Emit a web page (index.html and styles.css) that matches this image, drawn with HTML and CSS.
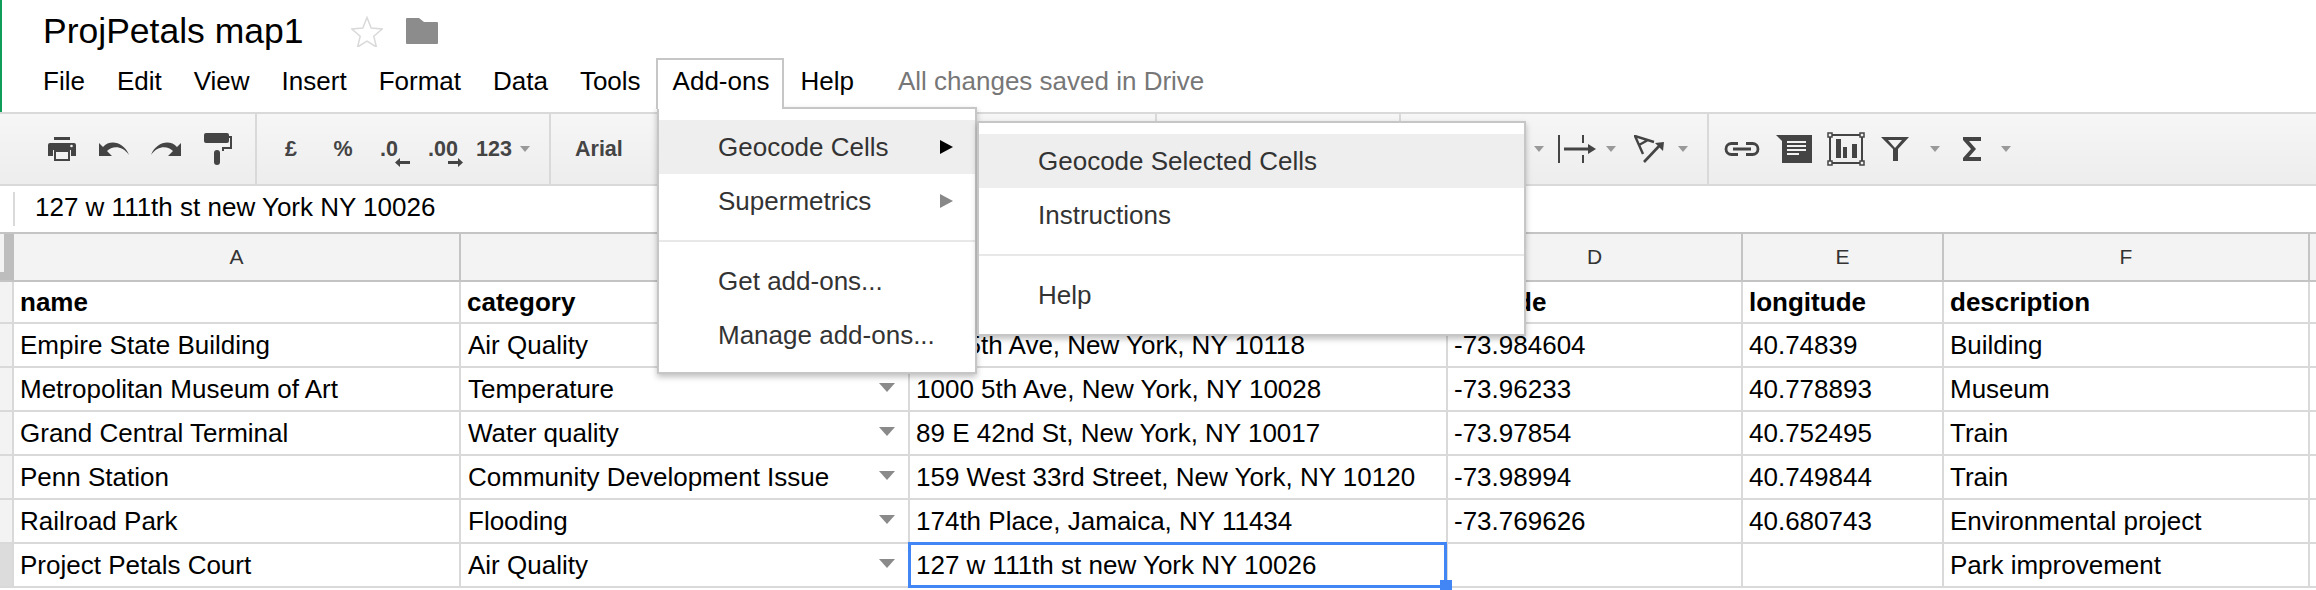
FILE: index.html
```html
<!DOCTYPE html>
<html lang="en">
<head>
    <meta charset="UTF-8">
    <meta name="viewport" content="width=device-width, initial-scale=1.0">
    <title>ProjPetals map1</title>
    <link rel="stylesheet" href="styles.css">
</head>
<body>
    <div class="sheet-page">
        <header class="doc-header">
            <div class="title-row">
                <h1 class="doc-title">ProjPetals map1</h1>
                <svg class="star-icon" viewBox="0 0 32 31"><path d="M16 1.5l4.2 10.6 11 .9-8.4 7.3 2.6 10.7L16 25.2l-9.4 5.8 2.6-10.7L.8 13l11-.9z"/></svg>
                <svg class="folder-icon" viewBox="0 0 32 26"><path d="M1 0h12l5 4h13a1 1 0 0 1 1 1v20a1 1 0 0 1-1 1H1a1 1 0 0 1-1-1V1a1 1 0 0 1 1-1z"/></svg>
            </div>
            <nav class="menu-bar">
                <span class="menu-item">File</span>
                <span class="menu-item">Edit</span>
                <span class="menu-item">View</span>
                <span class="menu-item">Insert</span>
                <span class="menu-item">Format</span>
                <span class="menu-item">Data</span>
                <span class="menu-item">Tools</span>
                <span class="menu-item menu-open">Add-ons</span>
                <span class="menu-item">Help</span>
                <span class="save-status">All changes saved in Drive</span>
            </nav>
        </header>

        <div class="toolbar">
            <div class="tool-group group-print">
                <span class="tool"><svg class="icon" width="28" height="24" viewBox="0 0 28 24"><rect x="6" y="0" width="16" height="3"/><path d="M2 6h24a2 2 0 0 1 2 2v11h-5v-6H5v6H0V8a2 2 0 0 1 2-2z"/><rect x="7" y="14" width="14" height="9" fill="none" stroke="#444" stroke-width="2"/><circle cx="23.500" cy="9" r="1.300" fill="#f2f2f2"/></svg></span>
                <span class="tool"><svg class="icon" width="30" height="14" viewBox="0 0 30 14"><path d="M0 1v13h13L8 9C13 4 23 3 30 13 25 0 11-3 4 5z"/></svg></span>
                <span class="tool"><svg class="icon" width="30" height="14" viewBox="0 0 30 14"><path d="M30 1v13H17l5-5C17 4 7 3 0 13 5 0 19-3 26 5z"/></svg></span>
                <span class="tool"><svg class="icon" width="28" height="32" viewBox="0 0 28 32"><rect x="0" y="0" width="25" height="10" rx="2"/><path d="M25 4h2v11h-8v3" fill="none" stroke="#444" stroke-width="2"/><rect x="10" y="17" width="6" height="15" rx="3"/></svg></span>
            </div>
            <div class="tool-group group-number">
                <span class="tool tool-text">£</span>
                <span class="tool tool-text">%</span>
                <span class="tool tool-text tool-decimal">.0
                    <svg class="dec-arrow arrow-less" width="15" height="9" viewBox="0 0 15 9"><path d="M0 4.500L5 0v3h10v3H5v3z"/></svg>
                </span>
                <span class="tool tool-text tool-decimal">.00
                    <svg class="dec-arrow arrow-more" width="15" height="9" viewBox="0 0 15 9"><path d="M15 4.500L10 0v3H0v3h10v3z"/></svg>
                </span>
                <span class="tool-more tool-text">123<i class="caret"></i></span>
            </div>
            <div class="tool-group group-font"><span class="tool-text font-name">Arial</span></div>
            <div class="tool-group group-size"></div>
            <div class="tool-group group-align">
                <i class="caret"></i>
                <svg class="icon wrap-icon" width="38" height="28" viewBox="0 0 38 28"><rect x="0" y="0" width="2" height="28"/><rect x="24" y="0" width="2" height="8"/><rect x="24" y="20" width="2" height="8"/><rect x="6" y="12.500" width="24" height="3"/><path d="M30 9l8 5-8 5z"/></svg>
                <i class="caret caret-wrap"></i>
                <svg class="icon rotate-icon" width="31" height="28" viewBox="0 0 31 28"><path d="M20 7L1 1l8 18M5 10l9-5" fill="none" stroke="#444" stroke-width="2.400"/><path d="M10 27L27 9" fill="none" stroke="#444" stroke-width="2.600"/><path d="M21 8l9-1-1 9z"/></svg>
                <i class="caret caret-rotate"></i>
            </div>
            <div class="tool-group group-insert">
                <span class="tool"><svg class="icon" width="36" height="14" viewBox="0 0 36 14"><path d="M14 1.500H7.500a5.500 5.500 0 0 0 0 11H14M22 1.500h6.500a5.500 5.500 0 0 1 0 11H22M9 7h18" fill="none" stroke="#444" stroke-width="2.800"/></svg></span>
                <span class="tool"><svg class="icon" width="36" height="28" viewBox="0 0 36 28"><path d="M0 0h36v28H6V6z"/><path d="M11 7h19M11 11h19M11 15h19M11 19h12" stroke="#f2f2f2" stroke-width="2"/></svg></span>
                <span class="tool"><svg class="icon" width="38" height="34" viewBox="0 0 38 34"><rect x="3" y="3" width="32" height="28" fill="none" stroke="#444" stroke-width="2"/><path d="M9 7h5v19H9zM16 15h4v11h-4zM25 12h5v14h-5z"/><g fill="#f2f2f2" stroke="#444" stroke-width="1.500"><rect x="1" y="1" width="4" height="4"/><rect x="33" y="1" width="4" height="4"/><rect x="1" y="29" width="4" height="4"/><rect x="33" y="29" width="4" height="4"/></g></svg></span>
                <svg class="icon filter-icon" width="28" height="24" viewBox="0 0 28 24"><path d="M0 0h28L17 12v12h-5V12z"/><path d="M7 3h14l-7 8z" fill="#f2f2f2"/></svg>
                <i class="caret caret-filter"></i>
                <svg class="icon sigma-icon" width="18" height="24" viewBox="0 0 18 24"><path d="M0 0h18v4H6l7 8-7 8h12v4H0v-3l8-9-8-9z"/></svg>
                <i class="caret caret-sigma"></i>
            </div>
        </div>

        <div class="formula-bar">
            <span class="formula-value">127 w 111th st new York NY 10026</span>
        </div>

        <table class="grid">
            <colgroup>
                <col class="col-row"><col class="col-a"><col class="col-b"><col class="col-c"><col class="col-d"><col class="col-e"><col class="col-f"><col class="col-g">
            </colgroup>
            <thead>
                <tr>
                    <th class="corner"></th><th>A</th><th>B</th><th>C</th><th>D</th><th>E</th><th>F</th><th></th>
                </tr>
            </thead>
            <tbody>
                <tr class="row-names">
                    <td class="row-head"></td><td>name</td><td>category</td><td>address</td><td>latitude</td><td>longitude</td><td>description</td><td></td>
                </tr>
                <tr>
                    <td class="row-head"></td><td>Empire State Building</td>
                    <td><div class="drop-cell">Air Quality<i class="drop-arrow"></i></div></td>
                    <td>350 5th Ave, New York, NY 10118</td><td>-73.984604</td><td>40.74839</td><td>Building</td><td></td>
                </tr>
                <tr>
                    <td class="row-head"></td><td>Metropolitan Museum of Art</td>
                    <td><div class="drop-cell">Temperature<i class="drop-arrow"></i></div></td>
                    <td>1000 5th Ave, New York, NY 10028</td><td>-73.96233</td><td>40.778893</td><td>Museum</td><td></td>
                </tr>
                <tr>
                    <td class="row-head"></td><td>Grand Central Terminal</td>
                    <td><div class="drop-cell">Water quality<i class="drop-arrow"></i></div></td>
                    <td>89 E 42nd St, New York, NY 10017</td><td>-73.97854</td><td>40.752495</td><td>Train</td><td></td>
                </tr>
                <tr>
                    <td class="row-head"></td><td>Penn Station</td>
                    <td><div class="drop-cell">Community Development Issue<i class="drop-arrow"></i></div></td>
                    <td>159 West 33rd Street, New York, NY 10120</td><td>-73.98994</td><td>40.749844</td><td>Train</td><td></td>
                </tr>
                <tr>
                    <td class="row-head"></td><td>Railroad Park</td>
                    <td><div class="drop-cell">Flooding<i class="drop-arrow"></i></div></td>
                    <td>174th Place, Jamaica, NY 11434</td><td>-73.769626</td><td>40.680743</td><td>Environmental project</td><td></td>
                </tr>
                <tr>
                    <td class="row-head row-active"></td><td>Project Petals Court</td>
                    <td><div class="drop-cell">Air Quality<i class="drop-arrow"></i></div></td>
                    <td class="selected">127 w 111th st new York NY 10026<i class="fill-handle"></i></td><td></td><td></td><td>Park improvement</td><td></td>
                </tr>
            </tbody>
        </table>

        <div class="dropdown addons-menu">
            <div class="dropdown-item item-hover">Geocode Cells<i class="sub-arrow"></i></div>
            <div class="dropdown-item">Supermetrics<i class="sub-arrow arrow-dim"></i></div>
            <div class="dropdown-sep"></div>
            <div class="dropdown-item">Get add-ons...</div>
            <div class="dropdown-item">Manage add-ons...</div>

            <div class="dropdown submenu">
                <div class="dropdown-item item-hover">Geocode Selected Cells</div>
                <div class="dropdown-item">Instructions</div>
                <div class="dropdown-sep"></div>
                <div class="dropdown-item">Help</div>
            </div>
        </div>
    </div>
</body>
</html>
```

FILE: styles.css
```css
body{
    margin: 0;
    font-family: "Liberation Sans", Arial, sans-serif;
    color: #000;
    background: #fff;
}
.sheet-page{
    position: relative;
    width: 2316px;
    height: 590px;
    overflow: hidden;
}

/* title and menus */
.doc-header{
    height: 112px;
    border-left: 2px solid #0f9d58;
    box-sizing: border-box;
}
.title-row{
    display: flex;
    align-items: center;
    height: 62px;
    padding-left: 41px;
}
.doc-title{
    margin: 0;
    width: 308px;
    font-size: 35.500px;
    font-weight: normal;
    white-space: nowrap;
}
.star-icon{
    width: 32px;
    height: 31px;
    fill: none;
    stroke: #d9d9d9;
    stroke-width: 1.500;
}
.folder-icon{
    width: 32px;
    height: 26px;
    margin-left: 23px;
    fill: #8c8c8c;
}
.menu-bar{
    display: flex;
    align-items: flex-start;
    padding-left: 25px;
    margin-top: -4px;
    font-size: 26px;
}
.menu-item{
    padding: 8px 16px 0;
    height: 47px;
    box-sizing: border-box;
    white-space: nowrap;
}
.menu-open{
    position: relative;
    z-index: 3;
    margin-left: -1px;
    padding: 6px 13px 0 15px;
    height: 51px;
    border: 2px solid #c6c6c6;
    border-bottom: none;
    background: #fff;
}
.save-status{
    margin-left: 28px;
    padding-top: 8px;
    color: #777;
    white-space: nowrap;
}

/* toolbar */
.toolbar{
    display: flex;
    height: 70px;
    border-top: 2px solid #d9d9d9;
    border-bottom: 2px solid #d9d9d9;
    background: linear-gradient(#f6f6f6, #ededed);
}
.tool-group{
    display: flex;
    align-items: center;
    flex: none;
    box-sizing: border-box;
    border-right: 2px solid #d9d9d9;
}
.icon{
    fill: #444;
    display: block;
}
.tool{
    display: flex;
    align-items: center;
    justify-content: center;
    width: 52px;
    height: 100%;
}
.tool-text{
    font-size: 21.500px;
    font-weight: bold;
    color: #444;
}
.tool-decimal{
    position: relative;
    justify-content: flex-start;
    padding-left: 11px;
    box-sizing: border-box;
}
.tool-decimal + .tool-decimal{
    padding-left: 7px;
}
.dec-arrow{
    position: absolute;
    top: 44px;
    fill: #444;
}
.arrow-less{
    left: 26px;
}
.arrow-more{
    left: 27px;
}
.tool-more{
    display: flex;
    align-items: center;
    margin-left: 3px;
}
.caret{
    display: block;
    flex: none;
    width: 0;
    height: 0;
    border-left: 5px solid transparent;
    border-right: 5px solid transparent;
    border-top: 6px solid #999;
}
.tool-more .caret{
    margin-left: 8px;
}
.group-print{
    width: 257px;
    padding-left: 36px;
}
.group-number{
    width: 294px;
    padding-left: 8px;
}
.group-font{
    width: 606px;
    padding-left: 24px;
}
.group-size{
    width: 244px;
}
.group-align{
    width: 308px;
    padding-left: 133px;
}
.wrap-icon{
    margin-left: 14px;
}
.caret-wrap{
    margin-left: 10px;
}
.rotate-icon{
    margin-left: 18px;
}
.caret-rotate{
    margin-left: 13px;
}
.group-insert{
    border-right: none;
    padding-left: 7px;
}
.filter-icon{
    margin-left: 9px;
}
.caret-filter{
    margin-left: 21px;
}
.sigma-icon{
    margin-left: 23px;
}
.caret-sigma{
    margin-left: 20px;
}

/* formula bar */
.formula-bar{
    display: flex;
    align-items: center;
    height: 46px;
    margin-left: 13px;
    font-size: 26px;
}
.formula-value{
    display: block;
    height: 34px;
    line-height: 30px;
    padding-left: 20px;
    border-left: 2px solid #d9d9d9;
}

/* cells */
.grid{
    table-layout: fixed;
    width: 2410px;
    border-collapse: separate;
    border-spacing: 0;
    font-size: 26px;
}
.col-row{ width: 14px; }
.col-a{ width: 447px; }
.col-b{ width: 449px; }
.col-c{ width: 538px; }
.col-d{ width: 295px; }
.col-e{ width: 201px; }
.col-f{ width: 366px; }
.col-g{ width: 100px; }

th{
    height: 50px;
    box-sizing: border-box;
    padding: 0;
    font-size: 21px;
    font-weight: normal;
    color: #333;
    background: #f3f3f3;
    border-top: 2px solid #c4c4c4;
    border-bottom: 2px solid #c4c4c4;
    border-right: 2px solid #c4c4c4;
}
th.corner{
    background: linear-gradient(#f3f3f3, #f3f3f3) 0 0 / 4px 38px no-repeat, #bdbdbd;
    border-right: none;
}
td{
    position: relative;
    height: 44px;
    box-sizing: border-box;
    padding: 1px 6px 0;
    border-right: 2px solid #d9d9d9;
    border-bottom: 2px solid #d9d9d9;
    white-space: nowrap;
}
.row-names td{
    height: 42px;
    font-weight: bold;
}
td.row-head{
    padding: 0;
    background: #f3f3f3;
}
td.row-active{
    background: #dcdcdc;
}
.drop-cell{
    display: flex;
    align-items: center;
    justify-content: space-between;
    padding-right: 7px;
    padding-left: 1px;
}
.drop-arrow{
    display: block;
    width: 0;
    height: 0;
    margin-top: -4px;
    border-left: 8px solid transparent;
    border-right: 8px solid transparent;
    border-top: 9px solid #8a8a8a;
}
.selected::after{
    content: "";
    position: absolute;
    top: -2px;
    right: -1px;
    bottom: -2px;
    left: -2px;
    border: 3px solid #4285f4;
}
.fill-handle{
    position: absolute;
    z-index: 1;
    right: -6px;
    bottom: -4px;
    width: 12px;
    height: 10px;
    background: #4285f4;
}

/* add-ons menu */
.dropdown{
    position: absolute;
    box-sizing: border-box;
    background: #fff;
    border: 2px solid #c6c6c6;
    box-shadow: 0 3px 6px rgba(0, 0, 0, .25);
    padding: 11px 0;
    font-size: 26px;
    color: #333;
}
.addons-menu{
    left: 657px;
    top: 107px;
    width: 320px;
    height: 267px;
    z-index: 2;
}
.submenu{
    left: 318px;
    top: 12px;
    width: 549px;
    height: 215px;
}
.dropdown-item{
    display: flex;
    align-items: center;
    justify-content: space-between;
    height: 54px;
    padding: 0 22px 0 59px;
    white-space: nowrap;
}
.item-hover{
    background: #eee;
}
.dropdown-sep{
    height: 2px;
    margin: 12px 0;
    background: #e8e8e8;
}
.sub-arrow{
    display: block;
    width: 0;
    height: 0;
    border-top: 7px solid transparent;
    border-bottom: 7px solid transparent;
    border-left: 13px solid #000;
}
.arrow-dim{
    border-left-color: #888;
}
```
